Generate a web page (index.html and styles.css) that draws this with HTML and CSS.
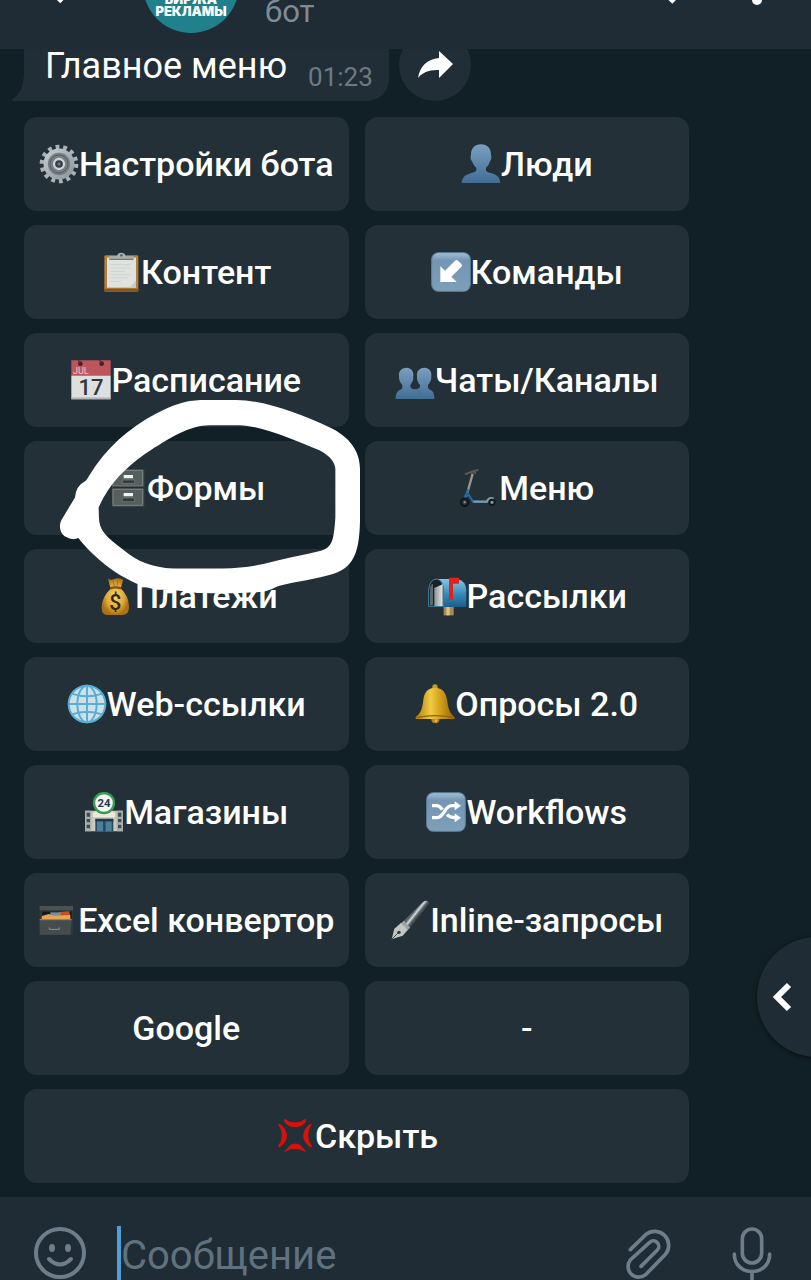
FILE: index.html
```html
<!DOCTYPE html>
<html lang="ru">
<head>
<meta charset="utf-8">
<meta name="viewport" content="width=device-width, initial-scale=1">
<title>Главное меню</title>
<link rel="stylesheet" href="styles.css">
</head>
<body>
<div class="app">
  <header class="header">
    <button class="header-btn" type="button" aria-label="Назад">
      <svg class="header-icon" viewBox="0 0 36 36"><path d="M32 18H6M20 32.500L6 18.500L20 4" /></svg>
    </button>
    <div class="avatar"><span>БИРЖА</span><span>РЕКЛАМЫ</span></div>
    <p class="status">бот</p>
    <button class="header-btn" type="button" aria-label="Поиск">
      <svg class="header-icon" viewBox="0 0 36 36"><circle cx="11" cy="13" r="11"/><path d="M19 21L31 33"/></svg>
    </button>
    <button class="header-btn dots" type="button" aria-label="Ещё">
      <svg class="header-icon" viewBox="0 0 36 36"><g class="solid"><circle cx="18" cy="5" r="5"/><circle cx="18" cy="18" r="5"/><circle cx="18" cy="31" r="5"/></g></svg>
    </button>
  </header>

  <main class="chat">
    <div class="message-row">
      <svg class="tail" viewBox="0 0 12 52"><path d="M12 0V52H1Q-1 51 2 49Q12 42 12 22Z"/></svg>
      <div class="bubble"><p class="message">Главное меню</p><time class="time">01:23</time></div>
      <button class="share" type="button" aria-label="Переслать">
        <svg viewBox="0 0 36 30"><path d="M22 1L36 14L22 28V20Q8 19 1 28Q4 10 22 8Z"/></svg>
      </button>
    </div>

    <div class="keyboard">
      <button class="key" type="button">
        <svg class="emoji" viewBox="0 0 120 120">
          <defs><linearGradient id="steel" x1="0" y1="0" x2="1" y2="1"><stop offset="0" stop-color="#c3cbd0"/><stop offset="1" stop-color="#8e979d"/></linearGradient></defs>
          <circle cx="60" cy="60" r="51" fill="none" stroke="#a9b2b8" stroke-width="14" pathLength="28" stroke-dasharray="1 1"/>
          <circle cx="60" cy="60" r="40" fill="#777f84" stroke="url(#steel)" stroke-width="13"/>
          <circle cx="60" cy="60" r="27" fill="none" stroke="#555d61" stroke-width="3"/>
          <circle cx="60" cy="60" r="15" fill="#343c40" stroke="#cdd3d6" stroke-width="7"/>
          <circle cx="60" cy="60" r="5" fill="#707a80"/>
        </svg><span>Настройки бота</span></button>
      <button class="key" type="button">
        <svg class="emoji" viewBox="0 0 120 120">
          <defs><linearGradient id="blue" x1="0" y1="0" x2="0" y2="1"><stop offset="0" stop-color="#7ba0bf"/><stop offset="1" stop-color="#416d95"/></linearGradient></defs>
          <path fill="url(#blue)" d="M60 1C79 1 91 14 90 34C92 36 92 48 87 51C84 62 80 67 75 71C74 80 76 83 86 86C104 90 116 95 118 117H2C4 97 15 91 34 86C45 83 47 80 46 71C40 66 36 61 33 51C28 48 28 36 30 34C29 14 41 1 60 1Z"/>
        </svg><span>Люди</span></button>

      <button class="key" type="button">
        <svg class="emoji" viewBox="0 0 120 120">
          <rect x="10" y="10" width="102" height="109" rx="4" fill="#b57f3c"/><path d="M10 110H112V116Q112 119 108 119H14Q10 119 10 116Z" fill="#86551f"/>
          <path d="M18 17H105V107H18Z" fill="#e0e2df"/><path d="M28 38H88M28 48H88M28 58H72M28 68H88M28 78H82M28 88H60" stroke="#cfd2d0" stroke-width="3"/>
          <path d="M84 107L105 86V107Z" fill="#c9cbc8"/>
          <path d="M24 13H48Q50 2 61 2Q72 2 74 13H98V24H24Z" fill="#a9b2b5"/><path d="M26 22H97" stroke="#737b7d" stroke-width="4"/><circle cx="61" cy="10" r="4" fill="#59656a"/>
        </svg><span>Контент</span></button>
      <button class="key" type="button">
        <svg class="emoji" viewBox="0 0 120 120">
          <defs><linearGradient id="tile" x1="0" y1="0" x2="0" y2="1"><stop offset="0" stop-color="#a5bfd4"/><stop offset=".2" stop-color="#7496b4"/><stop offset="1" stop-color="#7e9fb9"/></linearGradient></defs>
          <rect x="2" y="2" width="116" height="116" rx="20" fill="url(#tile)" stroke="#5d809d" stroke-width="3"/>
          <path d="M28 90V43L42 56L72 26Q77 22 81 26L91 36Q95 40 91 45L61 74L77 90Z" fill="#fff"/>
        </svg><span>Команды</span></button>

      <button class="key" type="button">
        <svg class="emoji" viewBox="0 0 120 120">
          <path d="M1 1H119V48H1Z" fill="#bd555c"/><path d="M1 47H119V118H1Z" fill="#dedfdf"/><path d="M1 115H119" stroke="#aeb2b3" stroke-width="5"/>
          <circle cx="28" cy="11" r="7" fill="#38252b"/><circle cx="92" cy="11" r="7" fill="#38252b"/><path d="M28 10L22 0M92 10L86 0" stroke="#5c3036" stroke-width="4"/>
          <text class="cal-month" x="6" y="41">JUL</text><text class="cal-day" x="60" y="104">17</text>
        </svg><span>Расписание</span></button>
      <button class="key" type="button">
        <svg class="emoji" viewBox="0 0 120 120">
          <path fill="url(#blue)" d="M34 23C49 23 57 35 55 49C56 61 51 69 46 75C46 84 48 87 60 88C72 87 76 84 75 75C69 69 65 61 66 49C64 35 73 23 88 23C103 23 111 35 109 49C110 61 105 69 99 75C98 85 101 88 108 91Q118 94 118 117H2Q2 96 13 91C21 88 23 84 22 75C16 69 11 61 12 49C10 35 19 23 34 23Z"/>
          <path d="M60 88C76 91 79 99 82 117" fill="none" stroke="#456f95" stroke-width="3"/>
        </svg><span>Чаты/Каналы</span></button>

      <button class="key" type="button">
        <svg class="emoji" viewBox="0 0 120 120">
          <path d="M15 4H112V116H15Z" fill="#42494a"/><path d="M18 7H107V54H18ZM18 64H107V112H18Z" fill="#565e5e" stroke="#7a8483" stroke-width="3"/><path d="M18 58H110" stroke="#252d30" stroke-width="4"/>
          <path d="M50 21H78V31H50ZM50 75H78V85H50Z" fill="#eef2f2"/><path d="M46 36H83V46H46ZM46 90H83V101H46Z" fill="#303839" stroke="#7b8484" stroke-width="2"/>
        </svg><span>Формы</span></button>
      <button class="key" type="button">
        <svg class="emoji" viewBox="0 0 120 120">
          <path d="M41 17L25 75" stroke="#9a9690" stroke-width="7"/><path d="M20 18Q32 14 42 10L56 6M42 10L49 15" stroke="#5d5a55" stroke-width="6" fill="none" stroke-linecap="round"/>
          <path d="M28 64L16 90L29 80L42 101H93" stroke="#246ba3" stroke-width="6" fill="none"/><path d="M43 101H84Q90 87 104 92" stroke="#8199a9" stroke-width="7" fill="none"/>
          <circle cx="17" cy="103" r="11" fill="#353b3e" stroke="#10171a" stroke-width="7"/><circle cx="17" cy="103" r="3" fill="#959c9f"/><circle cx="99" cy="103" r="8" fill="#8d979d" stroke="#11191d" stroke-width="6"/>
        </svg><span>Меню</span></button>

      <button class="key" type="button">
        <svg class="emoji" viewBox="0 0 120 120">
          <defs><radialGradient id="gold"><stop offset="0" stop-color="#f8db72"/><stop offset=".65" stop-color="#dda936"/><stop offset="1" stop-color="#a97119"/></radialGradient></defs>
          <path d="M39 8Q49 14 58 9Q72 3 85 11L77 37Q101 60 102 91Q103 116 83 117H38Q18 117 20 91Q22 61 47 38Z" fill="url(#gold)"/><path d="M46 37Q60 31 78 37" stroke="#84520e" stroke-width="7" fill="none"/><path d="M54 12L58 30M69 10L66 29" stroke="#a5731d" stroke-width="3"/>
          <text class="dollar" x="61" y="103">$</text>
        </svg><span>Платежи</span></button>
      <button class="key" type="button">
        <svg class="emoji" viewBox="0 0 120 120">
          <defs><linearGradient id="box" x1="0" y1="0" x2="0" y2="1"><stop offset="0" stop-color="#83c8e9"/><stop offset=".55" stop-color="#3589b7"/><stop offset="1" stop-color="#1c5d8c"/></linearGradient>
          <linearGradient id="door"><stop offset="0" stop-color="#8b9496"/><stop offset="1" stop-color="#e4e6e6"/></linearGradient></defs>
          <path d="M50 88H80V118H50Z" fill="#aa8a54"/><path d="M58 88H68V118H58Z" fill="#dbc28c"/>
          <path d="M32 9H91Q117 15 118 42V93H37Z" fill="url(#box)"/><path d="M5 91V42Q7 10 30 9Q48 12 50 42V91Z" fill="#182328" stroke="#3d86a4" stroke-width="3"/><path d="M9 88V40Q11 24 18 23V88Z" fill="#5b696c"/><path d="M22 36L47 25V90H22Z" fill="url(#door)"/>
          <path d="M66 5H96V23H78V71H66Z" fill="#e32118"/>
        </svg><span>Рассылки</span></button>

      <button class="key" type="button">
        <svg class="emoji" viewBox="0 0 120 120">
          <circle cx="60" cy="60" r="56" fill="#d0e0e6"/><g fill="none" stroke="#55b0d8" stroke-width="6"><circle cx="60" cy="60" r="55"/><ellipse cx="60" cy="60" rx="29" ry="55"/><path d="M60 3V117M3 60H117M14 29Q60 45 106 29M14 91Q60 75 106 91"/></g>
        </svg><span>Web-ссылки</span></button>
      <button class="key" type="button">
        <svg class="emoji" viewBox="0 0 120 120">
          <defs><linearGradient id="brass"><stop offset="0" stop-color="#b07a08"/><stop offset=".38" stop-color="#f0cb45"/><stop offset=".65" stop-color="#cf9e18"/><stop offset="1" stop-color="#936003"/></linearGradient></defs>
          <circle cx="61" cy="106" r="12" fill="#bc831b"/><circle cx="60" cy="9" r="8" fill="#c99e23"/><path d="M60 11C83 12 92 24 96 47C100 78 106 88 119 99V105H2V99C16 88 22 76 25 47C28 24 38 12 60 11Z" fill="url(#brass)"/><path d="M7 100Q60 90 114 100" stroke="#8e6207" stroke-width="4" fill="none"/><circle cx="63" cy="110" r="4" fill="#f0b545"/>
        </svg><span>Опросы 2.0</span></button>

      <button class="key" type="button">
        <svg class="emoji" viewBox="0 0 120 120">
          <path d="M3 56H117V118H3Z" fill="#c8cabb"/><path d="M27 64L41 54H79L93 64V76H27Z" fill="#eceada"/><path d="M3 56H22V118H3ZM98 56H117V118H98Z" fill="#a8b0a9"/>
          <path d="M8 62H18V74H8ZM8 81H18V91H8ZM8 98H18V109H8ZM102 62H112V74H102ZM102 81H112V91H102ZM102 98H112V109H102Z" fill="#3d4d54"/><path d="M34 80H88V118H34Z" fill="#284a62"/><path d="M39 88H57V118H39ZM65 88H83V118H65Z" fill="#4b7f9b"/><path d="M34 85H88" stroke="#1c3242" stroke-width="5"/>
          <circle cx="60" cy="33" r="30" fill="#f3f8ed" stroke="#39995a" stroke-width="7"/><text class="store-number" x="60" y="45">24</text>
        </svg><span>Магазины</span></button>
      <button class="key" type="button">
        <svg class="emoji" viewBox="0 0 120 120">
          <rect x="2" y="2" width="116" height="116" rx="20" fill="url(#tile)" stroke="#5d809d" stroke-width="3"/>
          <path d="M18 41H32Q41 41 49 53M63 68Q72 77 88 77M18 77H32C55 77 54 41 78 41H88" fill="none" stroke="#fff" stroke-width="10"/><path d="M86 28L105 41L86 55ZM86 64L105 77L86 91Z" fill="#fff"/>
        </svg><span>Workflows</span></button>

      <button class="key" type="button">
        <svg class="emoji" viewBox="0 0 120 120">
          <path d="M5 18H105V104H5Z" fill="#30383a"/><path d="M5 18H105V31H5Z" fill="#4a5253"/><path d="M13 35H101V56H13Z" fill="#11191b"/><path d="M63 36L94 34L97 53H63Z" fill="#cc4d22"/><path d="M37 37H68V50H37Z" fill="#7390a3"/><path d="M12 48L32 42L47 47L97 45V60H10Z" fill="#e9a44e"/><path d="M5 58H101L97 104H5Z" fill="#454c4d"/><path d="M5 59H101" stroke="#858a88" stroke-width="3"/><path d="M34 82V88H64V82" fill="none" stroke="#8b908e" stroke-width="3"/>
        </svg><span>Excel конвертор</span></button>
      <button class="key" type="button">
        <svg class="emoji" viewBox="0 0 120 120">
          <defs><linearGradient id="pen" gradientUnits="userSpaceOnUse" x1="70" y1="38" x2="90" y2="54"><stop offset="0" stop-color="#59636a"/><stop offset=".25" stop-color="#d8dddf"/><stop offset=".5" stop-color="#5c666b"/><stop offset="1" stop-color="#151c1f"/></linearGradient></defs>
          <path d="M40 64L96 8Q107 -2 115 5Q122 13 112 26L60 84Z" fill="url(#pen)"/><path d="M31 71L42 62L61 83L50 92Z" fill="#9da5a8"/><path d="M33 69L53 90L38 107L5 118L13 86Z" fill="#c3c7c4"/><path d="M6 117L24 99" stroke="#4b4d4a" stroke-width="3"/><circle cx="27" cy="97" r="5" fill="#32383a"/>
        </svg><span>Inline-запросы</span></button>

      <button class="key" type="button"><span>Google</span></button>
      <button class="key" type="button"><span>-</span></button>
      <button class="key key-wide" type="button">
        <svg class="emoji" viewBox="0 0 120 120"><g fill="none" stroke="#db100b" stroke-width="3" stroke-linejoin="round"><path fill="#db100b" d="M29 10Q41 21 60 21T91 10Q94 12 89 20Q79 32 60 32T31 20Q26 12 29 10ZM29 106Q39 97 42 92Q49 84 61 84T80 93L91 106Q77 97 60 97T29 106ZM11 25Q20 27 28 39Q37 53 33 69Q28 83 13 93L10 91Q21 79 22 60T11 25ZM109 25Q99 27 92 39Q83 53 87 69Q92 83 107 93L110 91Q99 79 98 60T109 25Z"/></g></svg><span>Скрыть</span></button>

      <svg class="marker" viewBox="100 190 940 620"><path fill-rule="evenodd" d="M195 452Q202 448 207 437C260 350 330 290 410 248C480 211 515 207 560 207H650C735 208 840 248 930 289C992 318 1022 362 1022 415V570C1020 650 1010 708 945 728C890 745 830 752 780 765C755 774 748 782 720 784Q640 790 550 787C510 786 475 775 410 777C330 762 240 702 176 622Q158 630 138 618C120 607 117 584 125 568L166 500Q169 465 195 452ZM237 530C270 455 320 410 378 368C450 321 510 283 570 283H660C730 285 830 330 900 358Q946 382 948 415V560C943 630 939 648 905 660C850 673 790 685 735 699Q680 712 610 713H460C400 710 353 693 310 656C260 619 238 598 238 560Z"/></svg>
    </div>
  </main>

  <form class="composer">
    <button class="tool" type="button" aria-label="Эмодзи"><svg class="smile" viewBox="0 0 54 54"><circle cx="27" cy="27" r="24"/><path d="M16 33Q27 44 38 33"/><ellipse class="eye" cx="19" cy="22" rx="3" ry="4"/><ellipse class="eye" cx="35" cy="22" rx="3" ry="4"/></svg></button>
    <input class="field" type="text" placeholder="Сообщение" aria-label="Сообщение">
    <button class="tool" type="button" aria-label="Прикрепить"><svg class="clip" viewBox="180 138 180 180"><path d="M211 209L258 163A42 42 0 0 1 317 222L257 284A32 32 0 0 1 211 240L268 188A16 16 0 0 1 292 210L243 259"/></svg></button>
    <button class="tool" type="button" aria-label="Голосовое сообщение"><svg class="mic" viewBox="507 138 138 180"><rect x="547" y="147" width="58" height="102" rx="29"/><path d="M523 222C523 292 629 292 629 222M576 275V312"/></svg></button>
  </form>

  <button class="side" type="button" aria-label="Открыть панель"><svg viewBox="0 0 20 32"><path d="M16 4L4 16L16 28"/></svg></button>
</div>
</body>
</html>
```
FILE: styles.css
```css
* { box-sizing: border-box; }
body { margin: 0; background: #111f26; font-family: Roboto, "Noto Sans", sans-serif; }
button { border: 0; padding: 0; margin: 0; background: none; color: inherit; font: inherit; cursor: pointer; }
p { margin: 0; }
svg { display: block; flex: none; }

.app { position: relative; display: flex; flex-direction: column; height: 100vh; overflow: hidden; color: #fff; }

.header { display: flex; align-items: flex-end; flex: none; height: 49px; padding: 0 36px 16px 42px; background: #1f2b35; }
.header-btn { align-self: flex-end; margin-bottom: 28px; }
.header-icon { width: 36px; height: 36px; fill: none; stroke: #fff; stroke-width: 5; }
.solid { fill: #fff; stroke: none; }
.dots { margin-left: 60px; }
.avatar { display: flex; flex: none; flex-direction: column; align-items: center; justify-content: flex-end; width: 96px; height: 96px; margin-left: 65px; padding-bottom: 16px; border-radius: 50%; background: #20818d; font: 900 13px/12px Inter, sans-serif; }
.status { flex: 1; margin: 0 0 3px 26px; color: #7f8c96; font-size: 31px; line-height: 36px; }

.chat { flex: none; }
.message-row { display: flex; align-items: flex-end; height: 52px; padding-left: 12px; overflow: hidden; }
.tail { width: 12px; height: 52px; fill: #222e37; }
.bubble { display: flex; gap: 21px; align-items: flex-start; height: 52px; padding: 0 16px 0 21px; border-radius: 0 0 22px 0; background: #222e37; }
.message { font-size: 36px; line-height: 34px; }
.time { margin-top: 12px; color: #6c7a84; font-size: 26px; line-height: 32px; }
.share { display: grid; flex: none; place-items: center; width: 72px; height: 72px; margin-left: 10px; border-radius: 50%; background: #222e37; }
.share svg { width: 36px; height: 30px; fill: #fff; }

.keyboard { position: relative; display: grid; grid-template-columns: 1fr 1fr; gap: 14px 16px; padding: 16px 122px 14px 24px; }
.key { display: flex; align-items: center; justify-content: center; min-height: 94px; border-radius: 13px; background: #233037; font-size: 34px; font-weight: 500; line-height: 40px; white-space: nowrap; }
.key-wide { grid-column: 1 / -1; }
.emoji { width: 40px; height: 40px; }
.cal-month { fill: #efc9c9; font-size: 27px; font-weight: 400; }
.cal-day { fill: #343638; font-size: 66px; font-weight: 500; text-anchor: middle; }
.dollar { fill: #382913; font-size: 64px; font-weight: 500; text-anchor: middle; }
.store-number { fill: #293758; font-size: 34px; font-weight: 700; text-anchor: middle; }
.marker { position: absolute; top: 293px; left: 53px; width: 313px; height: 207px; fill: #fff; pointer-events: none; }

.composer { display: flex; flex: 1; align-items: flex-start; min-height: 0; padding: 29px 36px 0 33px; overflow: hidden; background: #1f2b35; }
.tool { flex: none; }
.tool svg { fill: none; stroke: #6d7d89; stroke-linecap: round; }
.tool .smile { width: 54px; height: 54px; stroke-width: 4; }
.tool .eye { fill: #6d7d89; stroke: none; }
.tool .clip { width: 60px; height: 60px; stroke-width: 11; }
.tool .mic { width: 46px; height: 60px; margin-left: 49px; stroke-width: 11; }
.field { flex: 1; min-width: 0; height: 60px; margin: 0 0 0 30px; padding: 0; border: 0; border-left: 4px solid #519fd6; outline: 0; background: none; color: #fff; font: 400 40px/60px Roboto, "Noto Sans", sans-serif; }
.field::placeholder { color: #61727f; opacity: 1; }

.side { position: absolute; right: -66px; bottom: 223px; display: flex; align-items: center; width: 120px; height: 120px; padding-left: 16px; border-radius: 50%; background: #1f2c36; box-shadow: 0 1px 4px #0008; }
.side svg { width: 20px; height: 32px; fill: none; stroke: #fff; stroke-width: 6; }
```
